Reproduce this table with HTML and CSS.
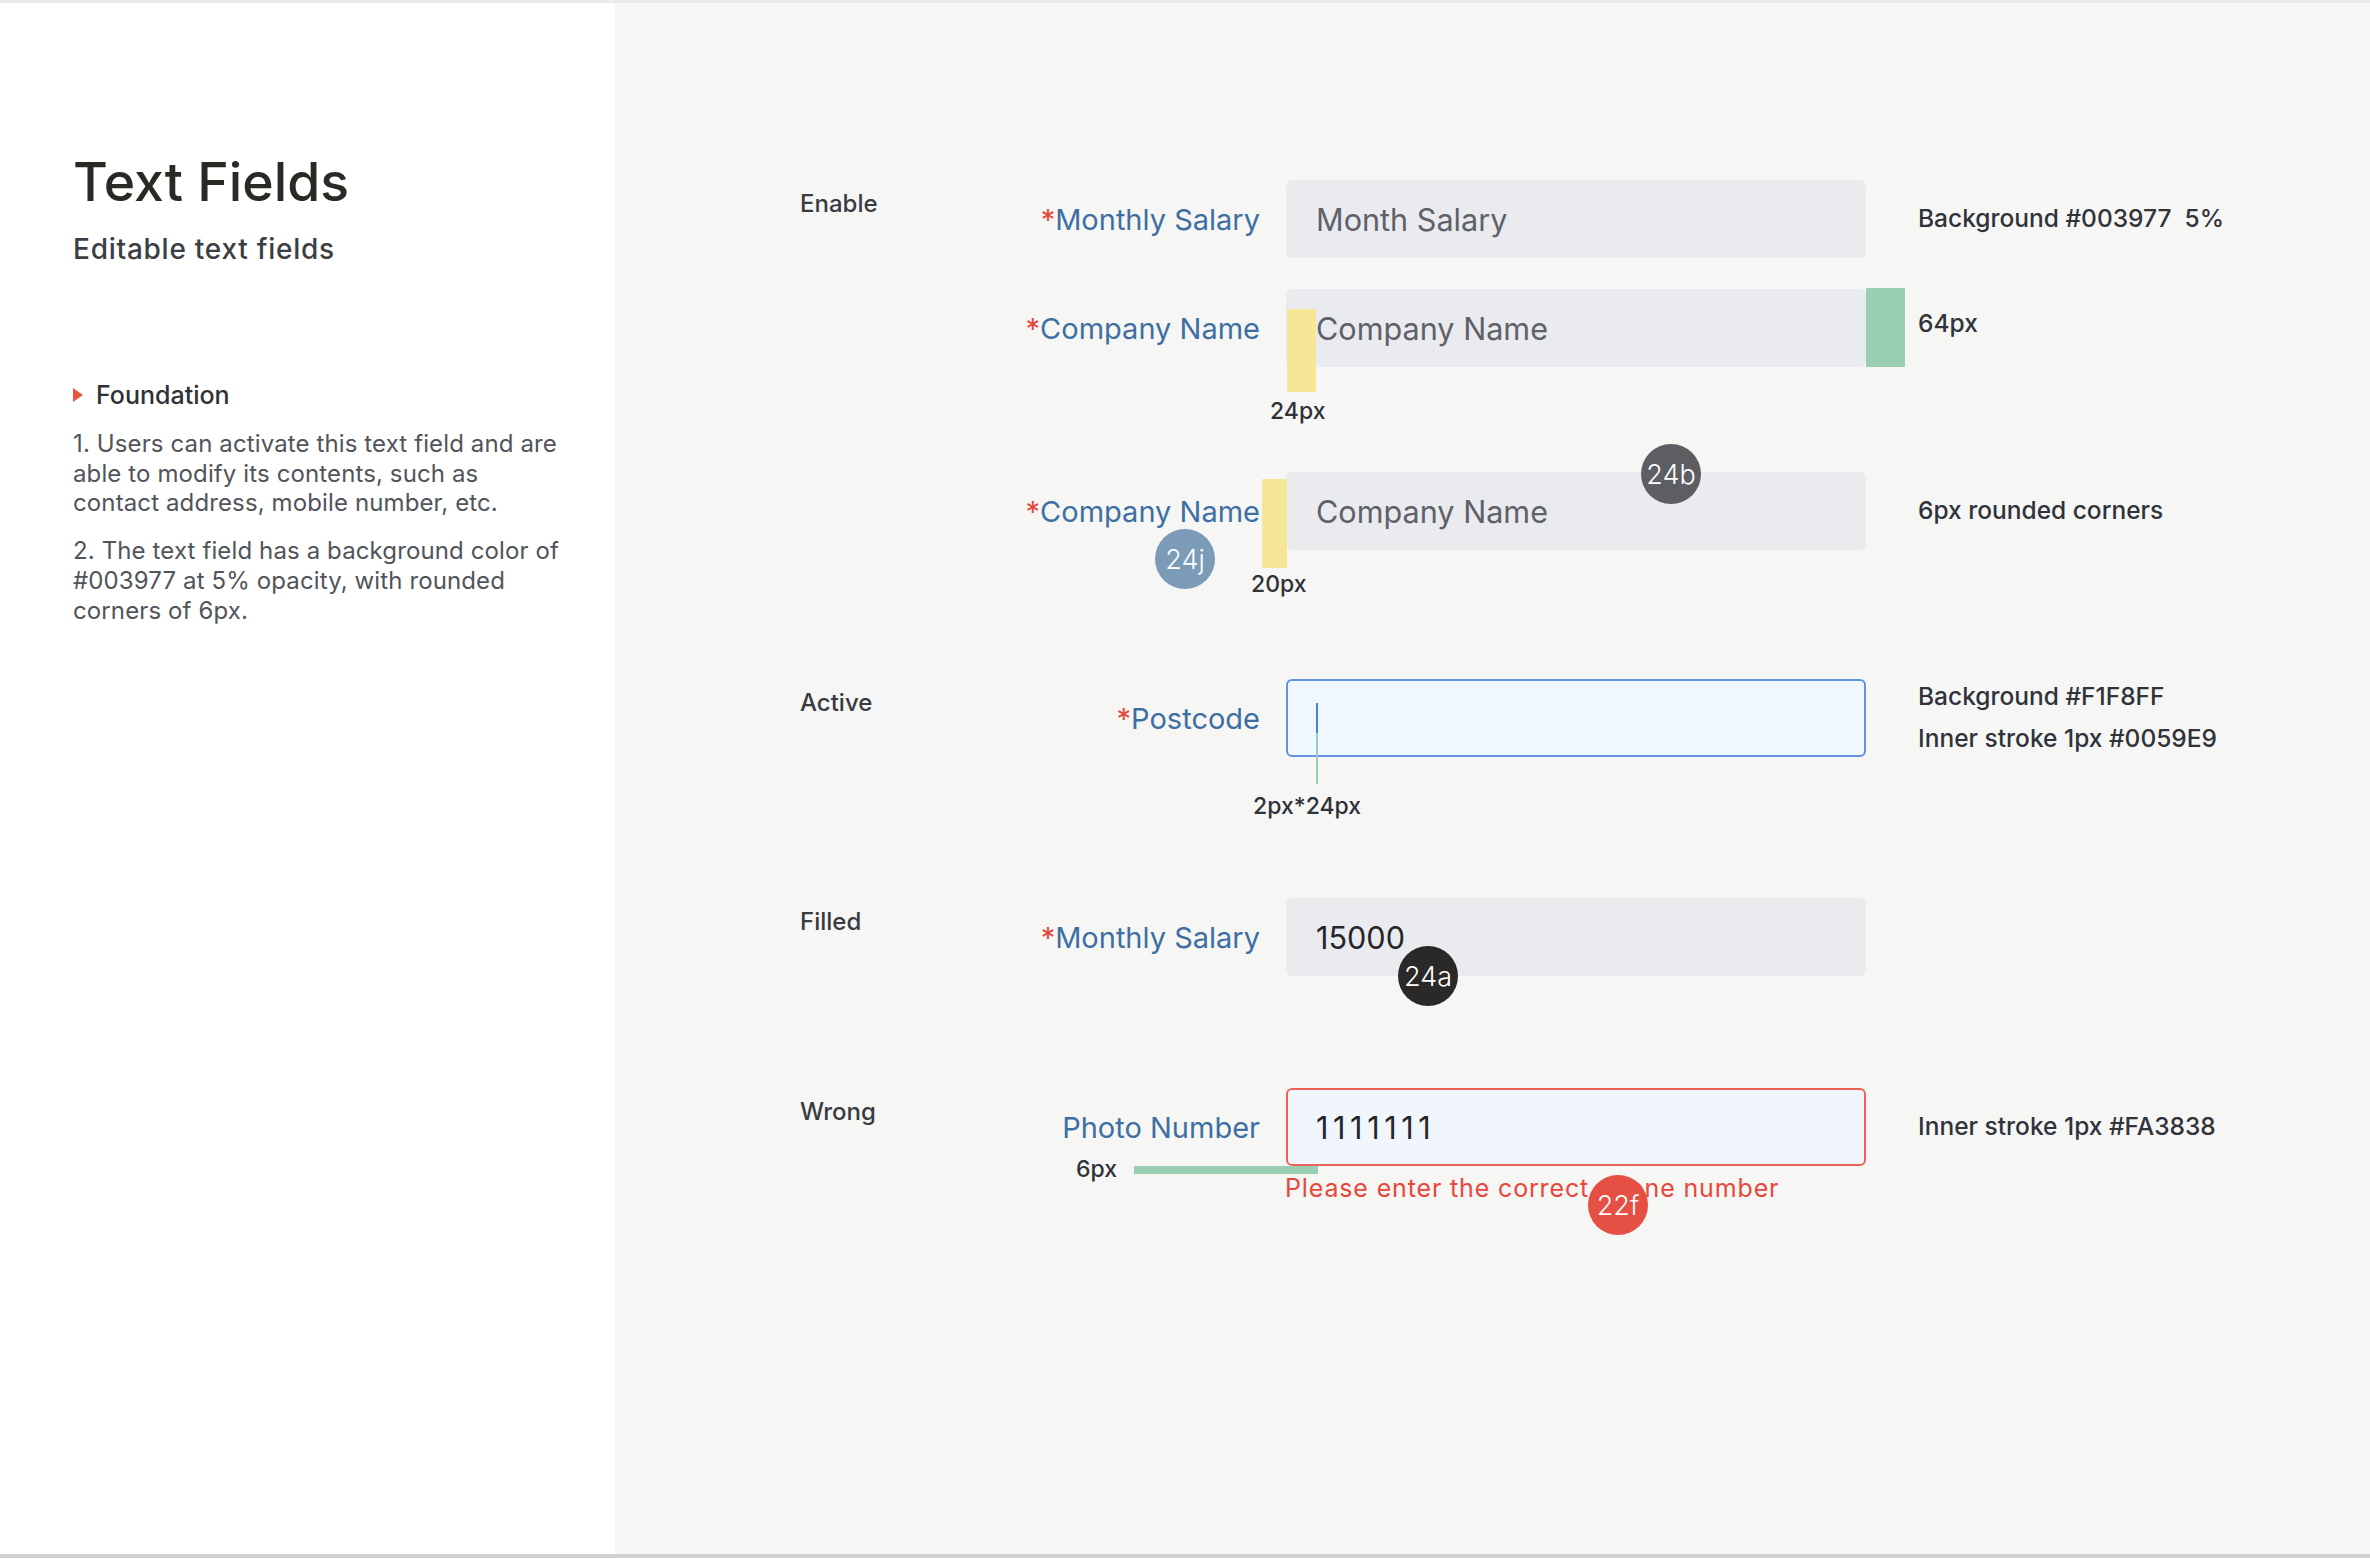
FILE: index.html
```html
<!DOCTYPE html>
<html lang="en">
<head>
<meta charset="utf-8">
<title>Text Fields</title>
<link rel="stylesheet" href="styles.css">
</head>
<body>
<div class="page">
  <aside class="intro">
    <h1 class="title">Text Fields</h1>
    <p class="subtitle">Editable text fields</p>
    <h2 class="section-head"><span class="tri"></span>Foundation</h2>
    <p class="para para-first">1. Users can activate this text field and are able to modify its contents, such as contact address, mobile number, etc.</p>
    <p class="para para-next">2. The text field has a background color of #003977 at 5% opacity, with rounded corners of 6px.</p>
  </aside>

  <main class="board">
    <div class="row">
      <div class="sec">Enable</div>
      <div class="lbl"><span class="req">*</span>Monthly Salary</div>
      <div class="field"><span class="ph">Month Salary</span></div>
      <div class="note">Background #003977&nbsp; 5%</div>
    </div>

    <div class="row row-2">
      <div class="sec"></div>
      <div class="lbl"><span class="req">*</span>Company Name</div>
      <div class="field">
        <span class="ybar ybar-pad"></span>
        <span class="ph">Company Name</span>
        <span class="gbar gbar-height"></span>
        <span class="dim dim-24">24px</span>
      </div>
      <div class="note note-high">64px</div>
    </div>

    <div class="row row-3">
      <div class="sec"></div>
      <div class="lbl"><span class="req">*</span>Company Name</div>
      <div class="field">
        <span class="ybar ybar-gap"></span>
        <span class="ph">Company Name</span>
        <span class="dim dim-20">20px</span>
        <span class="badge badge-b">24b</span>
        <span class="badge badge-j">24j</span>
      </div>
      <div class="note">6px rounded corners</div>
    </div>

    <div class="row row-4">
      <div class="sec">Active</div>
      <div class="lbl"><span class="req">*</span>Postcode</div>
      <div class="field field-active">
        <span class="caret"></span>
        <span class="caret-guide"></span>
        <span class="dim dim-caret">2px*24px</span>
      </div>
      <div class="note">
        <span>Background #F1F8FF</span>
        <span>Inner stroke 1px #0059E9</span>
      </div>
    </div>

    <div class="row row-5">
      <div class="sec">Filled</div>
      <div class="lbl"><span class="req">*</span>Monthly Salary</div>
      <div class="field"><span class="val">15000</span>
        <span class="badge badge-a">24a</span>
      </div>
      <div class="note"></div>
    </div>

    <div class="row row-6">
      <div class="sec">Wrong</div>
      <div class="lbl">Photo Number</div>
      <div class="fieldcol">
        <div class="field field-error">
          <span class="val val-ones">1111111</span>
          <span class="gbar gbar-gap"></span>
          <span class="dim dim-6">6px</span>
          <span class="badge badge-f">22f</span>
        </div>
        <p class="err">Please enter the correct phone number</p>
      </div>
      <div class="note">Inner stroke 1px #FA3838</div>
    </div>
  </main>
</div>
</body>
</html>
```

FILE: styles.css
```css
* {
  box-sizing: border-box;
  margin: 0;
  padding: 0;
}

html, body {
  width: 2370px;
  height: 1558px;
  background: #f6f6f4;
  overflow: hidden;
}

body {
  font-family: Inter, "Liberation Sans", sans-serif;
}

.page {
  display: flex;
  height: 1558px;
  border-top: 3px solid #eaeaef;
  border-bottom: 4px solid #d1d1d4;
}

/* ---------- left intro panel ---------- */
.intro {
  width: 615px;
  flex: none;
  background: #ffffff;
  padding-left: 73px;
}

.title {
  margin-top: 147px;
  font-size: 53.5px;
  line-height: 64px;
  font-weight: 500;
  color: #2b2924;
}

.subtitle {
  margin-top: 18px;
  font-size: 28px;
  line-height: 34px;
  font-weight: 500;
  letter-spacing: 0.75px;
  color: #3b3e45;
}

.section-head {
  margin-top: 114px;
  display: flex;
  align-items: center;
  gap: 13px;
  font-size: 25px;
  line-height: 30px;
  font-weight: 500;
  color: #2f3136;
}

.tri {
  width: 0;
  height: 0;
  border-left: 10px solid #e6553e;
  border-top: 7.5px solid transparent;
  border-bottom: 7.5px solid transparent;
}

.para {
  width: 490px;
  font-size: 24px;
  line-height: 29.7px;
  letter-spacing: 0.12px;
  color: #51545a;
}

.para-first { margin-top: 19px; }
.para-next { margin-top: 18px; }

/* ---------- right board ---------- */
.board {
  flex: 1;
  padding: 177px 0 0 185px;
  display: flex;
  flex-direction: column;
}

.row {
  display: grid;
  grid-template-columns: 174px 260px 580px 1fr;
  column-gap: 26px;
  align-items: start;
}

.row-2 { margin-top: 31px; }
.row-3 { margin-top: 105px; }
.row-4 { margin-top: 129px; }
.row-5 { margin-top: 141px; }
.row-6 { margin-top: 112px; }

.sec {
  padding-top: 12px;
  font-size: 24px;
  line-height: 24px;
  font-weight: 500;
  color: #383b42;
}

.lbl {
  height: 78px;
  display: flex;
  align-items: center;
  justify-content: flex-end;
  white-space: nowrap;
  font-size: 29px;
  color: #3d6fa3;
}

.req { color: #e5473b; }

.field {
  position: relative;
  height: 78px;
  display: flex;
  align-items: center;
  padding-left: 30px;
  border-radius: 6px;
  background: #eaebef;
  font-size: 30.6px;
  white-space: nowrap;
}

.ph {
  position: relative;
  color: #5e6168;
}

.val {
  color: #25262a;
}

.val-ones {
  letter-spacing: 4.6px;
}

.field-active {
  background: #f1f7fe;
  border: 2px solid #6391e6;
  padding-left: 28px;
}

.field-error {
  background: #f1f6fd;
  border: 2px solid #ec6258;
  padding-left: 28px;
}

.note {
  height: 78px;
  display: flex;
  flex-direction: column;
  justify-content: center;
  padding-left: 26px;
  white-space: nowrap;
  font-size: 24.5px;
  line-height: 41.6px;
  font-weight: 500;
  color: #30333a;
}

.note-high { padding-bottom: 8px; }

.err {
  margin-top: 6px;
  margin-left: -1px;
  white-space: nowrap;
  font-size: 25px;
  line-height: 32px;
  letter-spacing: 0.85px;
  color: #e8473c;
}

/* ---------- measurement overlays ---------- */
.ybar, .gbar, .caret, .caret-guide, .dim, .badge {
  position: absolute;
}

.ybar { background: #f5e796; }
.gbar { background: #9acfb3; }

.ybar-pad {
  left: 1px;
  top: 20px;
  width: 29px;
  height: 83px;
}

.ybar-gap {
  left: -24px;
  top: 7px;
  width: 25px;
  height: 89px;
}

.gbar-height {
  left: 580px;
  top: -1px;
  width: 39px;
  height: 79px;
}

.gbar-gap {
  left: -154px;
  top: 76px;
  width: 184px;
  height: 8px;
}

.caret {
  left: 28px;
  top: 22px;
  width: 2px;
  height: 30px;
  background: #4b7fdf;
}

.caret-guide {
  left: 28px;
  top: 52px;
  width: 2px;
  height: 51px;
  background: #9ccfb3;
}

.dim {
  font-size: 23px;
  line-height: 22px;
  font-weight: 500;
  color: #2f3238;
  white-space: nowrap;
}

.dim-24 { left: -16px; top: 111px; }
.dim-20 { left: -35px; top: 101px; }
.dim-caret { left: -35px; top: 114px; }
.dim-6 { left: -212px; top: 68px; }

.badge {
  width: 60px;
  height: 60px;
  border-radius: 50%;
  display: flex;
  align-items: center;
  justify-content: center;
  font-size: 27px;
  font-weight: 300;
  color: #ffffff;
}

.badge-b { left: 355px; top: -28px; background: #5d5e62; }
.badge-j { left: -131px; top: 57px; background: #7b9bb7; }
.badge-a { left: 112px; top: 48px; background: #2a2927; }
.badge-f { left: 300px; top: 85px; background: #e64f44; }
```
